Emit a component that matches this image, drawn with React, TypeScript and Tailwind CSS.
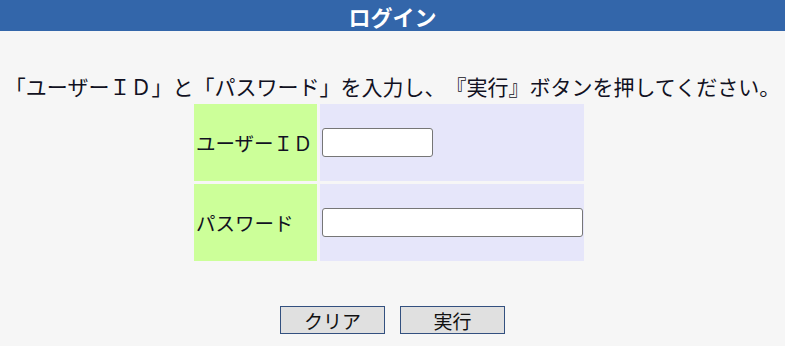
export default function App() {
  const jp = { fontFamily: '"Noto Sans CJK JP", "Noto Sans", sans-serif' };
  return (
    <div className="min-h-[346px] w-full bg-[#f6f6f6] text-[#111122]" style={jp}>
      <div className="flex h-[31px] items-center justify-center bg-[#3366aa]">
        <h1 className="text-[22px] font-bold leading-[28px] text-white">ログイン</h1>
      </div>

      <p className="mt-[43px] whitespace-nowrap text-center text-[21px] leading-[24px] [text-spacing-trim:space-all]">
        「ユーザーＩＤ」と「パスワード」を入力し、『実行』ボタンを押してください。
      </p>

      <div className="mt-[6px] flex justify-center">
        <div className="ml-[-7px] grid grid-cols-[123px_264px] gap-[3px]">
          <div className="flex h-[77px] items-center bg-[#ccff99] pl-[2px] text-[19.5px] whitespace-nowrap">
            ユーザーＩＤ
          </div>
          <div className="flex h-[77px] items-center bg-[#e6e6fa] pl-[2px]">
            <input
              type="text"
              className="h-[29px] w-[111px] rounded-[3px] border border-[#767676] bg-white px-1 outline-none"
            />
          </div>
          <div className="flex h-[77px] items-center bg-[#ccff99] pl-[2px] text-[19.5px] whitespace-nowrap">
            パスワード
          </div>
          <div className="flex h-[77px] items-center bg-[#e6e6fa] pl-[2px]">
            <input
              type="password"
              className="h-[29px] w-[261px] rounded-[3px] border border-[#767676] bg-white px-1 outline-none"
            />
          </div>
        </div>
      </div>

      <div className="mt-[45px] flex justify-center gap-[15px]">
        <button className="flex h-[28px] w-[105px] items-center justify-center border border-[#33507f] bg-[#e0e0e0] text-[19px] leading-none text-[#111]">
          クリア
        </button>
        <button className="flex h-[28px] w-[105px] items-center justify-center border border-[#33507f] bg-[#e0e0e0] text-[19px] leading-none text-[#111]">
          実行
        </button>
      </div>
    </div>
  );
}
